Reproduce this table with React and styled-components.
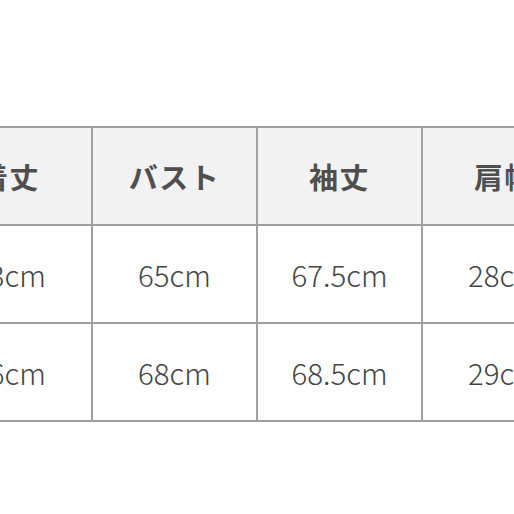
import React from 'react';
import styled, { createGlobalStyle } from 'styled-components';

const GlobalStyle = createGlobalStyle`
  html, body {
    margin: 0;
    padding: 0;
    background: #ffffff;
    overflow: hidden;
  }
  body {
    font-family: "Noto Sans CJK JP", "Noto Sans", sans-serif;
  }
`;

const Page = styled.div`
  width: 514px;
  height: 514px;
  overflow: hidden;
  padding-top: 126px;
  box-sizing: border-box;
`;

const Table = styled.div`
  display: grid;
  grid-template-columns: repeat(4, 163px);
  grid-auto-rows: 96px;
  gap: 2px;
  padding: 2px;
  width: max-content;
  margin-left: -74px;
  background: #a0a0a0;
`;

const Cell = styled.div`
  display: flex;
  align-items: center;
  justify-content: center;
  background: ${(p) => (p.$head ? '#f2f2f2' : '#ffffff')};
  color: ${(p) => (p.$head ? '#4f4f4f' : '#444444')};
  font-size: ${(p) => (p.$head ? '29px' : '29.5px')};
  font-weight: ${(p) => (p.$head ? 700 : 300)};
  letter-spacing: ${(p) => (p.$head ? '1.5px' : '0')};
  white-space: nowrap;
`;

const head = ['着丈', 'バスト', '袖丈', '肩幅'];
const rows = [
  ['63cm', '65cm', '67.5cm', '28cm'],
  ['66cm', '68cm', '68.5cm', '29cm'],
];

export default function App() {
  return (
    <Page>
      <GlobalStyle />
      <Table>
        {head.map((h) => (
          <Cell key={h} $head>{h}</Cell>
        ))}
        {rows.map((r, i) =>
          r.map((v, j) => <Cell key={`${i}-${j}`}>{v}</Cell>)
        )}
      </Table>
    </Page>
  );
}
